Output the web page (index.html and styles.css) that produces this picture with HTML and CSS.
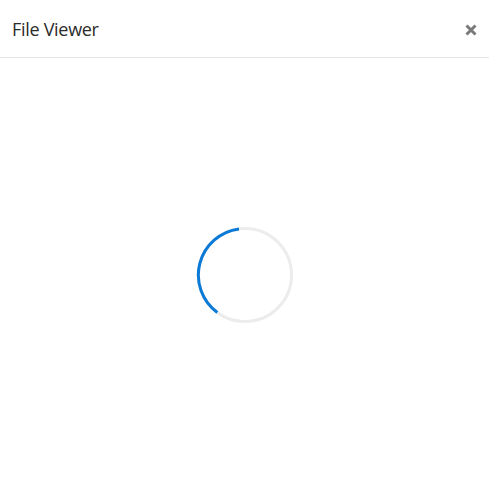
FILE: index.html
```html
<!DOCTYPE html>
<html>
<head>
<meta charset="utf-8">
<link rel="stylesheet" href="styles.css">
</head>
<body>
<div class="viewer">
  <header class="header">
    <h1 class="title">File Viewer</h1>
    <button class="close" aria-label="Close">
      <svg width="12" height="12" viewBox="0 0 12 12"><path d="M1.5 1.5 L10.5 10.5 M10.5 1.5 L1.5 10.5" stroke="#7a7a7a" stroke-width="3" stroke-linecap="butt"/></svg>
    </button>
  </header>
  <main class="content">
    <div class="spinner">
      <svg width="98" height="98" viewBox="0 0 98 98">
        <circle cx="49" cy="49" r="46.5" fill="none" stroke="#ececec" stroke-width="3"/>
        <path d="M43 2.9 A46.5 46.5 0 0 0 21.3 86.5" fill="none" stroke="#0a7ad6" stroke-width="3"/>
      </svg>
    </div>
  </main>
</div>
</body>
</html>
```
FILE: styles.css
```css
html, body {
  margin: 0;
  padding: 0;
  background: #fff;
}
.viewer {
  width: 489px;
  height: 485px;
  display: flex;
  flex-direction: column;
  font-family: "Open Sans", "Liberation Sans", sans-serif;
}
.header {
  height: 58px;
  box-sizing: border-box;
  border-bottom: 1px solid #e6e6e6;
  display: flex;
  align-items: center;
  justify-content: space-between;
  padding: 0 12px 0 12px;
}
.title {
  margin: 0;
  font-size: 18px;
  font-weight: 400;
  color: #2b2b2b;
  letter-spacing: -0.3px;
  line-height: 1;
  padding-top: 1px;
}
.close {
  border: 0;
  background: none;
  padding: 0;
  margin: 0;
  width: 12px;
  height: 12px;
  display: flex;
  margin-top: 2px;
}
.content {
  flex: 1;
  display: flex;
  align-items: center;
  justify-content: center;
  padding-top: 6px;
}
.spinner {
  width: 98px;
  height: 98px;
  margin-left: 1px;
}
.spinner svg { display: block; }
```
